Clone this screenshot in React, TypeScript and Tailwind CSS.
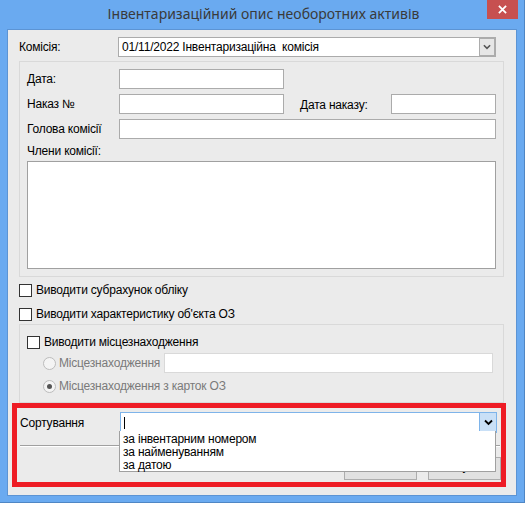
const ui = { fontFamily: '"Liberation Sans", Arial, sans-serif' };

const Chevron = ({ className }: { className?: string }) => (
  <svg viewBox="0 0 9 6" className={className} aria-hidden="true">
    <path d="M1 1l3.5 3.5L8 1" fill="none" stroke="currentColor" strokeWidth="1.8" />
  </svg>
);

const Checkbox = () => <span className="w-[13px] h-[13px] shrink-0 bg-white border border-[#333]" />;

const Radio = ({ checked }: { checked?: boolean }) => (
  <span className="w-[13px] h-[13px] shrink-0 rounded-full border border-[#bcbcbc] bg-[#f4f4f4] flex items-center justify-center">
    {checked && <span className="w-[5px] h-[5px] rounded-full bg-[#555]" />}
  </span>
);

const Input = ({ className }: { className: string }) => (
  <div className={`h-[20px] bg-white border border-[#ababab] ${className}`} />
);

export default function App() {
  return (
    <div
      className="relative w-[527px] h-[505px] bg-white overflow-hidden text-[12px] leading-[14px] text-black tracking-[-0.2px]"
      style={ui}
    >
      <div className="w-[525px] h-[503px] bg-[#6aaaf0] border-r border-b border-[#4f86c4] flex flex-col">
        {/* title bar */}
        <div className="h-[29px] shrink-0 flex items-start">
          <div
            className="flex-1 pt-[5px] text-center text-[14px] leading-[18px] tracking-normal text-[#3a3a3a] pl-[40px]"
            style={{ fontFamily: '"Noto Sans", "Open Sans", sans-serif' }}
          >
            Інвентаризаційний опис необоротних активів
          </div>
          <div className="w-[31px] h-[19px] mr-[6px] bg-[#c75050] flex items-center justify-center">
            <svg viewBox="0 0 10 10" className="w-[9px] h-[9px]" aria-hidden="true">
              <path d="M1 1l8 8M9 1l-8 8" stroke="white" strokeWidth="2" />
            </svg>
          </div>
        </div>

        {/* client area */}
        <div className="ml-[7px] w-[510px] h-[467px] bg-[#ebebeb] border border-[#5c94d4] flex flex-col pl-[11px]">
          <div className="mt-[7px] flex items-center">
            <span className="w-[99px]">Комісія:</span>
            <div className="w-[378px] h-[20px] bg-white border border-[#ababab] flex items-center pl-[3px]">
              <span className="flex-1">01/11/2022 Інвентаризаційна&nbsp; комісія</span>
              <div className="w-[16px] h-[18px] bg-[#e6e6e6] border border-[#acacac] flex items-center justify-center text-[#555]">
                <Chevron className="w-[8px] h-[6px]" />
              </div>
            </div>
          </div>

          {/* group 1 */}
          <div className="mt-[4px] w-[485px] h-[216px] border border-[#d9d9d9] pl-[7px] pt-[7px] flex flex-col">
            <div className="flex items-center">
              <span className="w-[92px]">Дата:</span>
              <Input className="w-[165px]" />
            </div>
            <div className="mt-[5px] flex items-end">
              <span className="w-[92px] self-center">Наказ №</span>
              <Input className="w-[165px]" />
              <span className="ml-[16px] w-[91px] mb-[2px]">Дата наказу:</span>
              <Input className="w-[105px]" />
            </div>
            <div className="mt-[5px] flex items-center">
              <span className="w-[92px]">Голова комісії</span>
              <Input className="w-[377px]" />
            </div>
            <span className="mt-[5px]">Члени комісії:</span>
            <div className="mt-[3px] w-[469px] h-[108px] bg-white border border-[#a0a0a0]" />
          </div>

          <div className="mt-[6px] flex items-center gap-[4px]">
            <Checkbox />
            <span>Виводити субрахунок обліку</span>
          </div>
          <div className="mt-[10px] flex items-center gap-[4px]">
            <Checkbox />
            <span>Виводити характеристику об'єкта ОЗ</span>
          </div>

          {/* group 2 */}
          <div className="mt-[3px] w-[485px] h-[79px] border border-[#d9d9d9] pl-[7px] pt-[10px] flex flex-col">
            <div className="flex items-center gap-[4px]">
              <Checkbox />
              <span>Виводити місцезнаходження</span>
            </div>
            <div className="mt-[4px] pl-[16px] flex items-center text-[#7a7a7a]">
              <Radio />
              <span className="ml-[3px] w-[105px]">Місцезнаходження</span>
              <div className="w-[329px] h-[20px] bg-white border border-[#d9d9d9]" />
            </div>
            <div className="mt-[6px] pl-[16px] flex items-center text-[#7a7a7a]">
              <Radio checked />
              <span className="ml-[3px]">Місцезнаходження з карток ОЗ</span>
            </div>
          </div>

          {/* sort row */}
          <div className="mt-[9px] flex items-center">
            <span className="w-[100px] ml-[1px]">Сортування</span>
            <div className="w-[377px] h-[21px] bg-white border border-[#7eb4ea] flex items-center">
              <span className="ml-[3px] w-px h-[12px] bg-black" />
              <div className="ml-auto w-[17px] h-[19px] bg-[#c9e0f7] border-l border-[#7eb4ea] flex items-center justify-center text-black">
                <Chevron className="w-[9px] h-[7px]" />
              </div>
            </div>
          </div>
          <div className="mt-[12px] ml-[1px] w-[480px] h-[2px] border-t border-[#a0a0a0] border-b border-b-white" />
          <div className="mt-[10px] flex gap-[11px] pl-[325px]">
            <div className="w-[73px] h-[23px] pb-[5px] bg-[#e1e1e1] border border-[#adadad] flex items-center justify-center">ОК</div>
            <div className="w-[73px] h-[23px] pb-[5px] bg-[#e1e1e1] border border-[#adadad] flex items-center justify-center">Скасувати</div>
          </div>
        </div>
      </div>

      {/* opened dropdown list */}
      <div className="absolute left-[119px] top-[431px] w-[377px] h-[41px] bg-white border border-[#a0a0a0] border-t-0 pl-[3px] pt-[2px] leading-[13px] flex flex-col">
        <span>за інвентарним номером</span>
        <span>за найменуванням</span>
        <span>за датою</span>
      </div>

      {/* red highlight */}
      <div className="absolute left-[12px] top-[403px] w-[494px] h-[84px] border-[5px] border-[#ee1c25]" />
    </div>
  );
}
